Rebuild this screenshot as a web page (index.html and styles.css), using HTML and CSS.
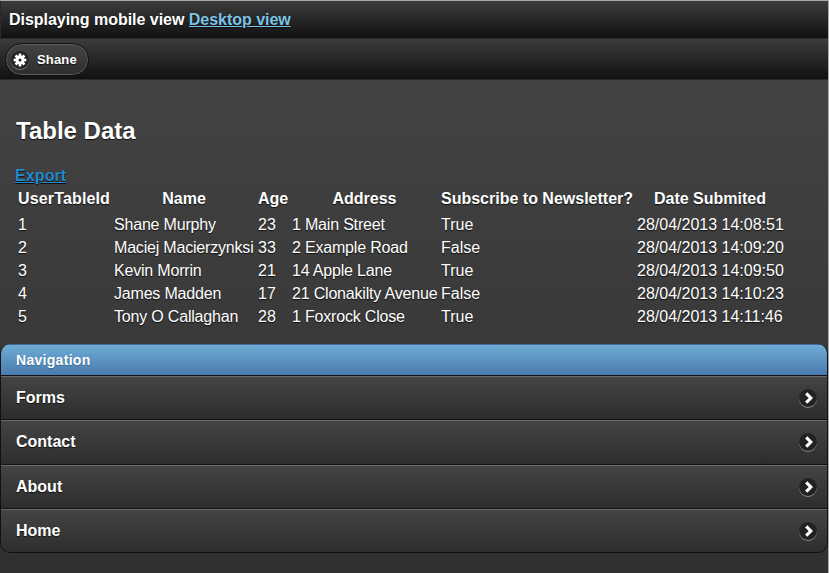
FILE: index.html
```html
<!DOCTYPE html>
<html lang="en">
<head>
<meta charset="utf-8">
<title>Table Data</title>
<link rel="stylesheet" href="styles.css">
</head>
<body>
<div class="page">
  <div class="switcher">Displaying mobile view <a href="#">Desktop view</a></div>
  <header class="header">
    <a class="user-button" href="#">
      <svg class="disc" viewBox="0 0 18 19" aria-hidden="true">
        <circle cx="9" cy="10" r="9" fill="#777"/>
        <circle cx="9" cy="9" r="9" fill="#222"/>
        <g stroke="#fff" stroke-width="2.6"><path d="M9 2.6v12.8M2.6 9h12.8M4.5 4.5l9 9M13.5 4.5l-9 9"/></g>
        <circle cx="9" cy="9" r="3.1" fill="#222" stroke="#fff" stroke-width="3.2"/>
      </svg>
      <span>Shane</span>
    </a>
  </header>
  <main class="content">
    <h2>Table Data</h2>
    <a class="export" href="#">Export</a>
    <table>
      <colgroup><col class="c-id"><col class="c-name"><col class="c-age"><col class="c-address"><col class="c-news"><col class="c-date"></colgroup>
      <thead><tr><th class="wide">UserTableId</th><th>Name</th><th>Age</th><th>Address</th><th>Subscribe to Newsletter?</th><th>Date Submited</th></tr></thead>
      <tbody>
        <tr><td>1</td><td class="text">Shane Murphy</td><td>23</td><td class="text">1 Main Street</td><td>True</td><td>28/04/2013 14:08:51</td></tr>
        <tr><td>2</td><td class="text">Maciej Macierzynksi</td><td>33</td><td class="text">2 Example Road</td><td>False</td><td>28/04/2013 14:09:20</td></tr>
        <tr><td>3</td><td class="text">Kevin Morrin</td><td>21</td><td class="text">14 Apple Lane</td><td>True</td><td>28/04/2013 14:09:50</td></tr>
        <tr><td>4</td><td class="text">James Madden</td><td>17</td><td class="text">21 Clonakilty Avenue</td><td>False</td><td>28/04/2013 14:10:23</td></tr>
        <tr><td>5</td><td class="text">Tony O Callaghan</td><td>28</td><td class="text">1 Foxrock Close</td><td>True</td><td>28/04/2013 14:11:46</td></tr>
      </tbody>
    </table>
  </main>
  <svg class="defs" aria-hidden="true">
    <symbol id="arrow" viewBox="0 0 18 19">
      <circle cx="9" cy="10" r="9" fill="#888"/>
      <circle cx="9" cy="9" r="9" fill="#222"/>
      <path d="M7.2 4.4 11.8 9 7.2 13.6" fill="none" stroke="#fff" stroke-width="3.1"/>
    </symbol>
  </svg>
  <ul class="nav">
    <li class="divider">Navigation</li>
    <li><a href="#"><span>Forms</span><svg class="disc"><use href="#arrow"/></svg></a></li>
    <li class="tall"><a href="#"><span>Contact</span><svg class="disc"><use href="#arrow"/></svg></a></li>
    <li><a href="#"><span>About</span><svg class="disc"><use href="#arrow"/></svg></a></li>
    <li><a href="#"><span>Home</span><svg class="disc"><use href="#arrow"/></svg></a></li>
  </ul>
</div>
</body>
</html>
```
FILE: styles.css
```css
* { box-sizing: border-box; }
body {
  margin: 0;
  height: 573px;
  overflow: hidden;
  font: 16px/21px "Liberation Sans", Arial, sans-serif;
  color: #fff;
  text-shadow: 0 1px 1px #111;
}
.page {
  height: 573px;
  border-top: 1px solid #aaa;
  border-right: 1px solid #aaa;
  background: linear-gradient(#434343 80px, #303030);
}
.switcher {
  height: 37px;
  padding: 8px 9px 8px 8px;
  border-left: 1px solid #2a2a2a;
  background: linear-gradient(#3c3c3c, #111);
  font-weight: bold;
  letter-spacing: -.03px;
}
.switcher a { color: #7cc4e7; }
.header {
  height: 42px;
  padding: 4px 5px 0;
  border-top: 1px solid #2a2a2a;
  border-bottom: 1px solid #2a2a2a;
  background: linear-gradient(#3c3c3c, #111);
}
.user-button {
  display: flex;
  align-items: center;
  width: 84px;
  height: 33px;
  padding: 1px 5px 0;
  gap: 8px;
  border: 1px solid #111;
  border-radius: 17px;
  background: linear-gradient(#444, #2d2d2d);
  box-shadow: inset 0 0 0 1px #5c5c5c;
  color: #fff;
  font-size: 13px;
  font-weight: bold;
  text-decoration: none;
}
.disc { width: 18px; height: 19px; flex: none; }
.user-button span { letter-spacing: .15px; padding-bottom: 1px; }
.content { height: 264px; padding: 35px 15px 0; }
h2 { margin: 0 0 19px 1px; font-size: 24px; line-height: 31px; }
.export { display: block; width: max-content; color: #2489ce; font-weight: bold; letter-spacing: .1px; }
table { table-layout: fixed; width: 771px; border-spacing: 2px; }
.c-id { width: 94px; }
.c-name { width: 142px; }
.c-age { width: 32px; }
.c-address { width: 147px; }
.c-news { width: 194px; }
.c-date { width: 148px; }
th, td { padding: 0 1px; white-space: nowrap; }
th { height: 24px; vertical-align: top; }
td { height: 21px; text-align: left; }
.wide { letter-spacing: .15px; }
.text { letter-spacing: -.19px; }
.defs { display: block; width: 0; height: 0; }
.nav {
  margin: 0;
  padding: 0;
  list-style: none;
  border: 1px solid #111;
  border-top: 0;
  border-radius: 10px;
  overflow: hidden;
  font-weight: bold;
}
.nav li { height: 44px; border-top: 1px solid #111; }
.nav .tall { height: 45px; }
.nav .divider {
  height: 31px;
  padding: 5px 15px;
  border-top: 1px solid #456f9a;
  background: linear-gradient(#6facd5, #497bae);
  font-size: 14px;
  letter-spacing: .3px;
  text-shadow: 0 1px 1px #3e6790;
}
.nav a {
  display: flex;
  justify-content: space-between;
  align-items: center;
  height: 100%;
  padding: 0 10px 0 15px;
  border-top: 1px solid #6a6a6a;
  background: linear-gradient(#444, #2d2d2d);
  color: #fff;
  text-decoration: none;
}
.nav span { padding-bottom: 2px; }
```
